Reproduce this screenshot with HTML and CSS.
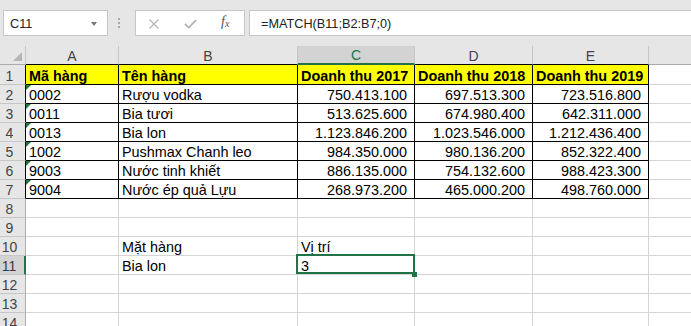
FILE: index.html
```html
<!DOCTYPE html>
<html lang="vi">
  <head>
    <meta charset="UTF-8" />
    <meta name="viewport" content="width=device-width, initial-scale=1.0" />
    <title>MATCH - Excel</title>
    <link rel="stylesheet" href="styles.css">
  </head>
  <body>
    <header class="topbar">
      <div class="namebox">
        <span>C11</span>
        <span class="caret"></span>
      </div>
      <div class="dots"><i></i><i></i><i></i></div>
      <div class="fxbox">
        <svg class="ico-x" width="10" height="10" viewBox="0 0 10 10">
          <path d="M0.5 0.5 L9.5 9.5 M9.5 0.5 L0.5 9.5" stroke="#b3b3b3" stroke-width="1.3" fill="none" />
        </svg>
        <svg class="ico-ok" width="13" height="10" viewBox="0 0 13 10">
          <path d="M1 5 L4.8 8.6 L12 1.2" stroke="#b3b3b3" stroke-width="1.8" fill="none" />
        </svg>
        <span class="fx">f<sub>x</sub></span>
      </div>
      <div class="formula">=MATCH(B11;B2:B7;0)</div>
    </header>

    <div class="sheet">
      <!-- column headers -->
      <div class="corner"></div>
      <div class="ch edge">A</div>
      <div class="ch edge">B</div>
      <div class="ch sel">C</div>
      <div class="ch edge">D</div>
      <div class="ch edge">E</div>
      <div class="ch">F</div>

      <!-- row 1 -->
      <div class="rh edge">1</div>
      <div class="t y b">Mã hàng</div>
      <div class="t y b">Tên hàng</div>
      <div class="t y b">Doanh thu 2017</div>
      <div class="t y b">Doanh thu 2018</div>
      <div class="t y b">Doanh thu 2019</div>
      <div></div>

      <!-- row 2 -->
      <div class="rh edge">2</div>
      <div class="t tri">0002</div>
      <div class="t">Rượu vodka</div>
      <div class="t n">750.413.100</div>
      <div class="t n">697.513.300</div>
      <div class="t n">723.516.800</div>
      <div></div>

      <!-- row 3 -->
      <div class="rh edge">3</div>
      <div class="t tri">0011</div>
      <div class="t">Bia tươi</div>
      <div class="t n">513.625.600</div>
      <div class="t n">674.980.400</div>
      <div class="t n">642.311.000</div>
      <div></div>

      <!-- row 4 -->
      <div class="rh edge">4</div>
      <div class="t tri">0013</div>
      <div class="t">Bia lon</div>
      <div class="t n">1.123.846.200</div>
      <div class="t n">1.023.546.000</div>
      <div class="t n">1.212.436.400</div>
      <div></div>

      <!-- row 5 -->
      <div class="rh edge">5</div>
      <div class="t tri">1002</div>
      <div class="t">Pushmax Chanh leo</div>
      <div class="t n">984.350.000</div>
      <div class="t n">980.136.200</div>
      <div class="t n">852.322.400</div>
      <div></div>

      <!-- row 6 -->
      <div class="rh edge">6</div>
      <div class="t tri">9003</div>
      <div class="t">Nước tinh khiết</div>
      <div class="t n">886.135.000</div>
      <div class="t n">754.132.600</div>
      <div class="t n">988.423.300</div>
      <div></div>

      <!-- row 7 -->
      <div class="rh edge">7</div>
      <div class="t tri">9004</div>
      <div class="t">Nước ép quả Lựu</div>
      <div class="t n">268.973.200</div>
      <div class="t n">465.000.200</div>
      <div class="t n">498.760.000</div>
      <div></div>

      <!-- row 8 -->
      <div class="rh">8</div>
      <div></div><div></div><div></div><div></div><div></div><div></div>

      <!-- row 9 -->
      <div class="rh">9</div>
      <div></div><div></div><div></div><div></div><div></div><div></div>

      <!-- row 10 -->
      <div class="rh">10</div>
      <div></div>
      <div>Mặt hàng</div>
      <div>Vị trí</div>
      <div></div><div></div><div></div>

      <!-- row 11 -->
      <div class="rh sel">11</div>
      <div></div>
      <div>Bia lon</div>
      <div class="active">3</div>
      <div></div><div></div><div></div>

      <!-- row 12 -->
      <div class="rh">12</div>
      <div></div><div></div><div></div><div></div><div></div><div></div>

      <!-- row 13 -->
      <div class="rh">13</div>
      <div></div><div></div><div></div><div></div><div></div><div></div>

      <!-- row 14 -->
      <div class="rh">14</div>
      <div></div><div></div><div></div><div></div><div></div><div></div>
    </div>
  </body>
</html>
```

FILE: styles.css
```css
body {
  margin: 0;
  width: 691px;
  height: 326px;
  overflow: hidden;
  background: #fff;
  font-family: "Liberation Sans", Arial, sans-serif;
  color: #000;
}
.topbar {
  height: 46px;
  box-sizing: border-box;
  padding-top: 10px;
  display: flex;
  align-items: flex-start;
  background: #e6e6e6;
}
.namebox,
.fxbox,
.formula {
  height: 26px;
  box-sizing: border-box;
  border: 1px solid #c6c6c6;
  background: #fff;
}
.namebox {
  width: 105px;
  margin-left: 3px;
  padding: 3px 10px 0 6px;
  display: flex;
  justify-content: space-between;
  font-size: 12.7px;
  line-height: 21px;
  color: #222;
}
.caret {
  width: 0;
  height: 0;
  margin-top: 8px;
  border-left: 3px solid transparent;
  border-right: 3px solid transparent;
  border-top: 4px solid #777;
}
.dots {
  margin: 8px 0 0 10px;
  width: 3px;
  display: flex;
  flex-direction: column;
  gap: 2px;
}
.dots i {
  display: block;
  width: 2px;
  height: 2px;
  background: #a8a8a8;
}
.fxbox {
  width: 110px;
  margin-left: 14px;
  display: flex;
  align-items: center;
  padding-left: 13px;
}
.ico-x {
  margin-top: 1px;
}
.ico-ok {
  margin-left: 25px;
  margin-top: 1px;
}
.fx {
  margin-left: 24px;
  font-family: "Liberation Serif", "Times New Roman", serif;
  font-style: italic;
  font-size: 14px;
  color: #555;
  line-height: 14px;
}
.fx sub {
  font-size: 10px;
  vertical-align: -1px;
}
.formula {
  flex: 1;
  margin-left: 4px;
  margin-right: -10px;
  padding: 3px 0 0 11px;
  font-size: 12.7px;
  line-height: 21px;
  color: #222;
}

.sheet {
  display: grid;
  grid-template-columns: 26px 93px 179px 117px 118px 116px 117px;
  grid-template-rows: 19px 20px repeat(13, 19px);
}
.sheet > div {
  box-sizing: border-box;
  border-right: 1px solid #d4d4d4;
  border-bottom: 1px solid #d4d4d4;
  display: flex;
  align-items: flex-end;
  padding: 0 3px;
  font-size: 14.4px;
  line-height: 16px;
  white-space: nowrap;
  position: relative;
}
.sheet > .corner {
  background: #e6e6e6;
  border-right-color: #c6c6c6;
  border-bottom-color: #ababab;
}
.corner::after {
  content: "";
  position: absolute;
  right: 3px;
  bottom: 3px;
  width: 0;
  height: 0;
  border-left: 9px solid transparent;
  border-bottom: 9px solid #b5b5b5;
}
.sheet > .ch {
  background: #e6e6e6;
  justify-content: center;
  font-size: 14px;
  color: #444;
  border-right-color: #c6c6c6;
  border-bottom-color: #ababab;
}
.sheet > .rh {
  background: #e6e6e6;
  justify-content: center;
  padding: 0 6px 0 0;
  font-size: 14px;
  color: #444;
  border-right-color: #ababab;
  border-bottom-color: #c6c6c6;
}
.sheet > .ch.edge {
  border-bottom-color: #000;
}
.sheet > .rh.edge {
  border-right-color: #000;
}
.sheet > .ch.sel {
  background: #d3d3d3;
  color: #217346;
  border-bottom: 2px solid #217346;
}
.sheet > .rh.sel {
  background: #d3d3d3;
  color: #3c3c3c;
  border-right: 2px solid #217346;
}
.sheet > .t {
  border-right-color: #000;
  border-bottom-color: #000;
}
.sheet > .y {
  background: #ffff00;
}
.b {
  font-weight: bold;
}
.sheet > .n {
  justify-content: flex-end;
  padding-right: 7px;
}
.tri::before {
  content: "";
  position: absolute;
  left: 0;
  top: 0;
  width: 0;
  height: 0;
  border-top: 5px solid #1f7a3c;
  border-right: 5px solid transparent;
}
.active::before {
  content: "";
  position: absolute;
  left: -2px;
  top: -2px;
  right: -1px;
  bottom: 0;
  border: 2px solid #217346;
  z-index: 1;
}
.active::after {
  content: "";
  position: absolute;
  left: 114px;
  top: 16px;
  width: 5px;
  height: 5px;
  background: #217346;
  z-index: 2;
}
```
